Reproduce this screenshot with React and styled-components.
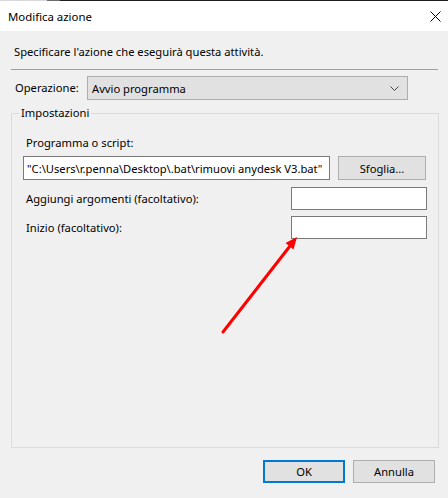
import React from "react";
import styled, { createGlobalStyle } from "styled-components";

const GlobalStyle = createGlobalStyle`
  html, body {
    margin: 0;
    padding: 0;
    background: #f0f0f0;
  }
  body {
    font-family: "Noto Sans", "Open Sans", sans-serif;
    font-size: 11.2px;
    color: #000;
  }
`;

const Window = styled.div`
  position: relative;
  width: 448px;
  height: 498px;
  display: flex;
  flex-direction: column;
  background: #f0f0f0;
  overflow: hidden;
`;

const TopEdge = styled.div`
  height: 1px;
  background: linear-gradient(
    to right,
    #d8d8d8 0,
    #d8d8d8 47px,
    #6a6a6a 47px,
    #6a6a6a 60px,
    #1e1e1e 60px
  );
`;

const TitleBar = styled.div`
  height: 30px;
  background: #fff;
  display: flex;
  align-items: center;
  justify-content: space-between;
  padding: 0 7px 0 8px;
`;

const Title = styled.span`
  font-size: 11.4px;
`;

const Body = styled.div`
  flex: 1;
  display: flex;
  flex-direction: column;
  padding: 0 9px 0 11px;
`;

const Intro = styled.div`
  margin: 13px 0 0 3px;
  line-height: 16px;
`;

const Separator = styled.div`
  height: 1px;
  background: #a0a0a0;
  margin: 9px 1px 0 0;
`;

const OperationRow = styled.div`
  display: grid;
  grid-template-columns: 76px 321px;
  align-items: center;
  margin-top: 6px;
`;

const Label = styled.span`
  line-height: 16px;
  padding-left: ${(p) => p.$indent || 0}px;
`;

const Select = styled.div`
  box-sizing: border-box;
  height: 24px;
  background: #e1e1e1;
  border: 1px solid #adadad;
  display: flex;
  align-items: center;
  justify-content: space-between;
  padding: 0 8px 0 4px;
`;

const GroupBox = styled.fieldset`
  box-sizing: border-box;
  margin: 5px 0 0 0;
  padding: 0 0 0 11px;
  height: 343px;
  border: 1px solid #dcdcdc;
  min-width: 0;
`;

const Legend = styled.legend`
  margin-left: -4px;
  padding: 0 2px;
  line-height: 16px;
`;

const Field = styled.div`
  display: flex;
  flex-direction: column;
  margin-top: 14px;
`;

const InputRow = styled.div`
  display: flex;
  align-items: center;
  gap: 8px;
  margin-top: 5px;
`;

const TextBox = styled.div`
  box-sizing: border-box;
  width: ${(p) => p.$width}px;
  height: ${(p) => p.$height || 23}px;
  background: #fff;
  border: 1px solid #7a7a7a;
  display: flex;
  align-items: center;
  padding: 0 3px;
  white-space: nowrap;
  overflow: hidden;
`;

const OptionRow = styled.div`
  display: flex;
  align-items: center;
  justify-content: space-between;
  margin-top: ${(p) => p.$gap}px;
  padding-right: 11px;
`;

const Button = styled.div`
  box-sizing: border-box;
  width: ${(p) => p.$width || 82}px;
  height: ${(p) => p.$height || 23}px;
  background: #e1e1e1;
  border: ${(p) => (p.$default ? "2px solid #0078d7" : "1px solid #adadad")};
  display: flex;
  align-items: center;
  justify-content: center;
`;

const Footer = styled.div`
  display: flex;
  justify-content: flex-end;
  gap: 8px;
  margin: 12px 4px 0 0;
`;

const Annotation = styled.svg`
  position: absolute;
  left: 0;
  top: 0;
  pointer-events: none;
`;

const CloseIcon = () => (
  <svg width="11" height="11" viewBox="0 0 11 11">
    <path d="M0.5 0.5 L10.5 10.5 M10.5 0.5 L0.5 10.5" stroke="#000" strokeWidth="1" />
  </svg>
);

const Chevron = () => (
  <svg width="9" height="5" viewBox="0 0 9 5">
    <path d="M0.5 0.5 L4.5 4.5 L8.5 0.5" stroke="#444" fill="none" strokeWidth="1" />
  </svg>
);

const App = () => {
  return (
    <>
      <GlobalStyle />
      <Window>
        <TopEdge />
        <TitleBar>
          <Title>Modifica azione</Title>
          <CloseIcon />
        </TitleBar>
        <Body>
          <Intro>Specificare l'azione che eseguirà questa attività.</Intro>
          <Separator />
          <OperationRow>
            <Label $indent={4}>Operazione:</Label>
            <Select>
              <span>Avvio programma</span>
              <Chevron />
            </Select>
          </OperationRow>
          <GroupBox>
            <Legend>Impostazioni</Legend>
            <Field>
              <Label $indent={3}>Programma o script:</Label>
              <InputRow>
                <TextBox $width={307} $height={24}>
                  "C:\Users\r.penna\Desktop\.bat\rimuovi anydesk V3.bat"
                </TextBox>
                <Button $width={88} $height={24}>
                  Sfoglia...
                </Button>
              </InputRow>
            </Field>
            <OptionRow $gap={7}>
              <Label $indent={3}>Aggiungi argomenti (facoltativo):</Label>
              <TextBox $width={136} />
            </OptionRow>
            <OptionRow $gap={6}>
              <Label $indent={3}>Inizio (facoltativo):</Label>
              <TextBox $width={136} />
            </OptionRow>
          </GroupBox>
          <Footer>
            <Button $default>OK</Button>
            <Button>Annulla</Button>
          </Footer>
        </Body>
        <Annotation width="448" height="498">
          <line
            x1="223"
            y1="332"
            x2="290"
            y2="246"
            stroke="#ff0000"
            strokeWidth="3"
            strokeLinecap="round"
          />
          <polygon points="297,237 285.5,243 293.5,249.5" fill="#ff0000" />
        </Annotation>
      </Window>
    </>
  );
};

export default App;
